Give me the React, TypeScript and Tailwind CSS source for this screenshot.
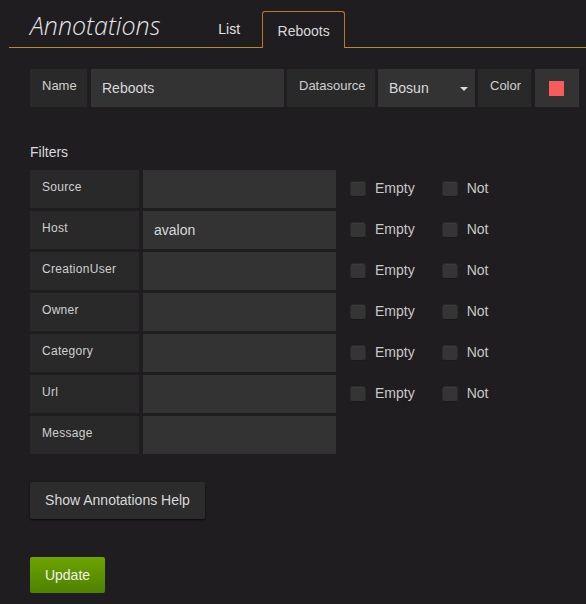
import React from "react";

const filters = [
  { name: "Source", value: "", checks: true },
  { name: "Host", value: "avalon", checks: true },
  { name: "CreationUser", value: "", checks: true },
  { name: "Owner", value: "", checks: true },
  { name: "Category", value: "", checks: true },
  { name: "Url", value: "", checks: true },
  { name: "Message", value: "", checks: false },
];

function Check({ label }: { label: string }) {
  return (
    <div className="flex items-center">
      <span className="w-4 h-4 rounded-[3px] bg-[#353535] border border-[#2a2a2a] border-b-[#1a1a1a] shadow-[inset_0_1px_1px_rgba(255,255,255,0.04)]" />
      <span className="ml-[9px] text-[14px] text-[#c8c8c8]">{label}</span>
    </div>
  );
}

export default function App() {
  return (
    <div
      className="w-[586px] h-[604px] bg-[#1f1d1f] text-[#d8d9da] overflow-hidden"
      style={{ fontFamily: '"Liberation Sans", Arial, sans-serif' }}
    >
      {/* header */}
      <div className="pl-[9px] pt-[11px]">
        <div className="flex items-end h-[37px] border-b border-[#b88e24] relative">
          <div
            className="ml-[21px] mb-[9px] text-[25px] italic font-light text-[#e4e4e4] leading-none"
            style={{ fontFamily: '"Open Sans", sans-serif' }}
          >
            Annotations
          </div>
          <div className="ml-[58px] mb-[11px] text-[14px] text-[#e4e4e4] leading-none">List</div>
          <div className="ml-[22px] -mb-px h-[37px] w-[83px] border border-b-0 border-[#c0761e] rounded-t-[3px] bg-[#1f1d1f] flex items-center justify-center text-[14px] text-[#d8d9da] pt-[2px]">
            Reboots
          </div>
        </div>
      </div>

      <div className="pl-[30px]">
        {/* top row */}
        <div className="mt-[21px] flex h-[38px] text-[13px]">
          <div className="w-[57px] bg-[#292929] flex items-center pl-[12px] pb-[4px] text-[#d0d0d0]">Name</div>
          <div className="ml-[4px] w-[193px] bg-[#333333] flex items-center pl-[11px] text-[14px] text-[#d8d9da]">Reboots</div>
          <div className="ml-[3px] w-[88px] bg-[#292929] flex items-center pl-[12px] pb-[4px] text-[#d0d0d0]">Datasource</div>
          <div className="ml-[3px] w-[97px] bg-[#333333] flex items-center pl-[11px] text-[14px] text-[#d8d9da] relative">
            Bosun
            <span className="absolute right-[7px] top-[18px] w-0 h-0 border-l-[4px] border-r-[4px] border-t-[4px] border-l-transparent border-r-transparent border-t-[#d8d9da]" />
          </div>
          <div className="ml-[3px] w-[53px] bg-[#292929] flex items-center pl-[12px] pb-[4px] text-[#d0d0d0]">Color</div>
          <div className="ml-[4px] w-[44px] bg-[#333333] flex items-center justify-center pr-[2px]">
            <span className="w-[15px] h-[15px] bg-[#f75b5b]" />
          </div>
        </div>

        {/* filters */}
        <div className="mt-[37px] text-[14px] text-[#d8d9da] leading-[17px]">Filters</div>
        <div className="mt-[9px] flex flex-col gap-[3px]">
          {filters.map((f) => (
            <div key={f.name} className="flex h-[38px] items-stretch">
              <div className="w-[109px] bg-[#292929] flex items-center pl-[12px] pb-[4px] text-[12px] text-[#d0d0d0] tracking-[0.3px]">
                {f.name}
              </div>
              <div className="ml-[4px] w-[193px] bg-[#333333] flex items-center pl-[11px] text-[14px] text-[#d8d9da]">
                {f.value}
              </div>
              {f.checks && (
                <div className="flex items-center ml-[14px] pb-[1px]">
                  <Check label="Empty" />
                  <div className="ml-[27px]">
                    <Check label="Not" />
                  </div>
                </div>
              )}
            </div>
          ))}
        </div>

        <button className="mt-[28px] w-[175px] h-[37px] bg-[#2c2c2c] rounded-[2px] shadow-[0_1px_2px_rgba(0,0,0,0.7)] text-[14px] text-[#d8d9da] flex items-center justify-center">
          Show Annotations Help
        </button>

        <button className="mt-[38px] w-[75px] h-[36px] rounded-[2px] bg-gradient-to-b from-[#6ea300] to-[#4e8200] text-[14px] text-[#f0f0f0] flex items-center justify-center">
          Update
        </button>
      </div>
    </div>
  );
}
